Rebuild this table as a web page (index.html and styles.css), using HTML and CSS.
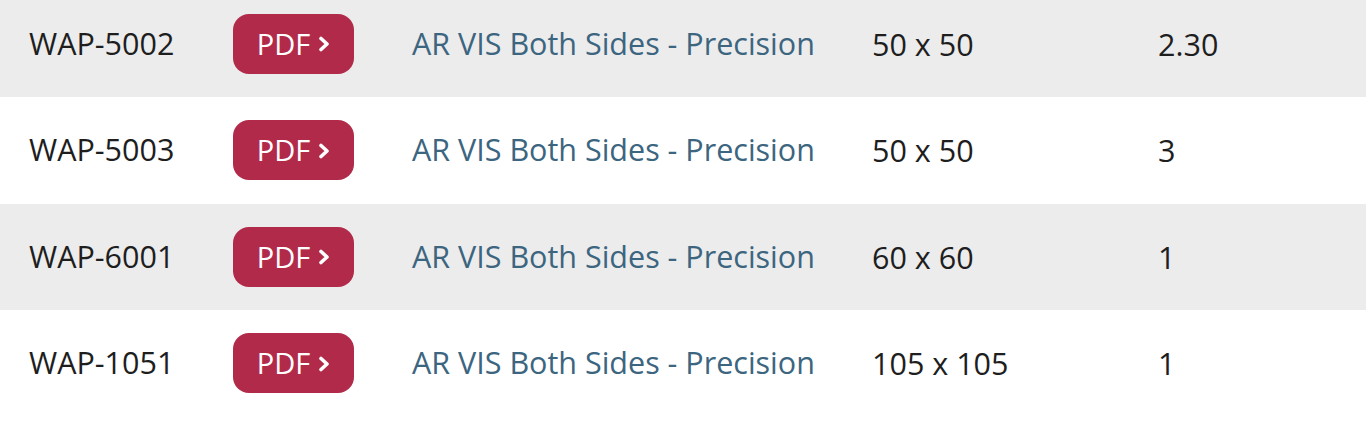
FILE: index.html
```html
<!DOCTYPE html>
<html>
<head>
<meta charset="utf-8">
<link rel="stylesheet" href="styles.css">
</head>
<body>
<div class="table">
  <div class="row alt">
    <div class="cell code">WAP-5002</div>
    <div class="cell"><a class="pdf" href="#">PDF<svg class="chev" viewBox="0 0 12 16" width="12" height="16"><path d="M3 2.5 L9 8 L3 13.5" fill="none" stroke="#fff" stroke-width="3.6" stroke-linecap="round" stroke-linejoin="round"/></svg></a></div>
    <div class="cell desc">AR VIS Both Sides - Precision</div>
    <div class="cell">50 x 50</div>
    <div class="cell">2.30</div>
  </div>
  <div class="row">
    <div class="cell code">WAP-5003</div>
    <div class="cell"><a class="pdf" href="#">PDF<svg class="chev" viewBox="0 0 12 16" width="12" height="16"><path d="M3 2.5 L9 8 L3 13.5" fill="none" stroke="#fff" stroke-width="3.6" stroke-linecap="round" stroke-linejoin="round"/></svg></a></div>
    <div class="cell desc">AR VIS Both Sides - Precision</div>
    <div class="cell">50 x 50</div>
    <div class="cell">3</div>
  </div>
  <div class="row alt">
    <div class="cell code">WAP-6001</div>
    <div class="cell"><a class="pdf" href="#">PDF<svg class="chev" viewBox="0 0 12 16" width="12" height="16"><path d="M3 2.5 L9 8 L3 13.5" fill="none" stroke="#fff" stroke-width="3.6" stroke-linecap="round" stroke-linejoin="round"/></svg></a></div>
    <div class="cell desc">AR VIS Both Sides - Precision</div>
    <div class="cell">60 x 60</div>
    <div class="cell">1</div>
  </div>
  <div class="row">
    <div class="cell code">WAP-1051</div>
    <div class="cell"><a class="pdf" href="#">PDF<svg class="chev" viewBox="0 0 12 16" width="12" height="16"><path d="M3 2.5 L9 8 L3 13.5" fill="none" stroke="#fff" stroke-width="3.6" stroke-linecap="round" stroke-linejoin="round"/></svg></a></div>
    <div class="cell desc">AR VIS Both Sides - Precision</div>
    <div class="cell">105 x 105</div>
    <div class="cell">1</div>
  </div>
</div>
</body>
</html>
```
FILE: styles.css
```css
html, body {
  margin: 0;
  padding: 0;
  background: #fff;
}
body {
  font-family: "Open Sans", "Noto Sans", sans-serif;
  font-size: 30.5px;
  color: #1e1e1e;
  overflow: hidden;
}
.table {
  margin-top: -9.5px;
}
.row {
  display: grid;
  grid-template-columns: 204px 179px 460px 286px 1fr;
  align-items: center;
  height: 106.5px;
  padding-left: 29px;
}
.row.alt {
  background: #ececec;
}
.cell {
  white-space: nowrap;
}
.code,
.desc {
  padding-bottom: 2px;
}
.desc {
  color: #3c6580;
}
.pdf {
  display: inline-flex;
  align-items: center;
  justify-content: center;
  gap: 8px;
  box-sizing: border-box;
  width: 121px;
  height: 60px;
  border-radius: 16px;
  background: #b22a4a;
  color: #fff;
  font-size: 29px;
  text-decoration: none;
  padding-bottom: 1px;
}
.chev {
  display: block;
  margin-top: 2px;
}
```
